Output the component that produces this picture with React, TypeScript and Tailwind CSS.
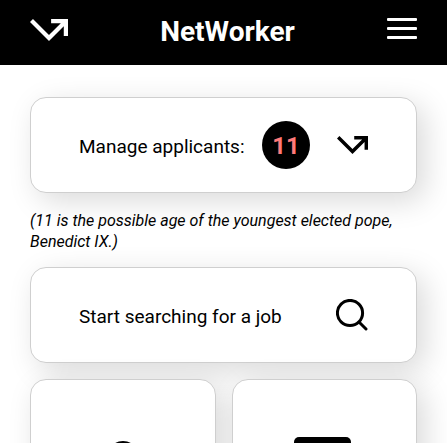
import type { ReactNode } from "react";

const cardClass =
  "rounded-2xl border border-[#cfcfcf] bg-white shadow-[8px_8px_30px_rgba(0,0,0,0.15)]";

function ArrowIcon({ className }: { className: string }) {
  return (
    <svg viewBox="3 7 18 10.41" fill="currentColor" className={className} aria-hidden="true">
      <path d="M3 8.41l9 9 7-7V15h2V7h-8v2h4.59L12 14.59 4.41 7 3 8.41z" />
    </svg>
  );
}

function MenuIcon() {
  return (
    <svg viewBox="0 0 30 21" fill="currentColor" className="h-[21px] w-[30px]" aria-hidden="true">
      <rect width="30" height="3" rx="1" />
      <rect y="9" width="30" height="3" rx="1" />
      <rect y="18" width="30" height="3" rx="1" />
    </svg>
  );
}

function SearchIcon() {
  return (
    <svg
      viewBox="0 0 32 32"
      fill="none"
      stroke="currentColor"
      strokeWidth="3"
      strokeLinecap="round"
      className="size-8"
      aria-hidden="true"
    >
      <circle cx="14" cy="14" r="12.6" />
      <path d="M23.5 23.5L30 30" />
    </svg>
  );
}

function UserIcon() {
  return (
    <svg viewBox="0 0 64 64" fill="currentColor" className="size-16" aria-hidden="true">
      <circle cx="32" cy="16" r="16" />
      <path d="M4 64c0-16 10-26 28-26s28 10 28 26z" />
    </svg>
  );
}

function CardIcon() {
  return (
    <svg viewBox="0 0 61 68" fill="currentColor" className="h-[68px] w-[61px]" aria-hidden="true">
      <rect width="57" height="68" rx="5" />
    </svg>
  );
}

function RowCard({ label, children }: { label: string; children: ReactNode }) {
  return (
    <a
      href="#"
      className={`flex h-24 items-center justify-between px-12 text-[19px] leading-6 ${cardClass}`}
    >
      <span className="pt-1">{label}</span>
      {children}
    </a>
  );
}

export default function App() {
  return (
    <div className="h-screen overflow-hidden bg-white font-['Roboto',sans-serif] text-black">
      <header className="flex h-[65px] items-center justify-between bg-black px-[30px] pb-2 text-white">
        <button type="button" aria-label="Home" className="pt-[3px]">
          <ArrowIcon className="h-[22px] w-[38px]" />
        </button>
        <h1 className="pt-1.5 text-[28px] leading-8 font-bold">NetWorker</h1>
        <button type="button" aria-label="Menu">
          <MenuIcon />
        </button>
      </header>

      <main className="flex flex-col gap-4 px-[30px] py-8">
        <RowCard label="Manage applicants:">
          <span className="flex items-center gap-[27px]">
            <span className="flex size-12 items-center justify-center rounded-full bg-black pt-0.5 text-2xl font-bold text-[#ff7a7a]">
              11
            </span>
            <ArrowIcon className="h-[18px] w-[31px]" />
          </span>
        </RowCard>

        <p className="-mb-px pt-px text-base leading-[21px] italic">
          (11 is the possible age of the youngest elected pope, Benedict IX.)
        </p>

        <RowCard label="Start searching for a job">
          <SearchIcon />
        </RowCard>

        <div className="grid grid-cols-2 gap-4">
          <a href="#" aria-label="Profile" className={`flex justify-center py-[61px] ${cardClass}`}>
            <UserIcon />
          </a>
          <a href="#" aria-label="Listings" className={`flex justify-center py-[57px] ${cardClass}`}>
            <CardIcon />
          </a>
        </div>
      </main>
    </div>
  );
}
